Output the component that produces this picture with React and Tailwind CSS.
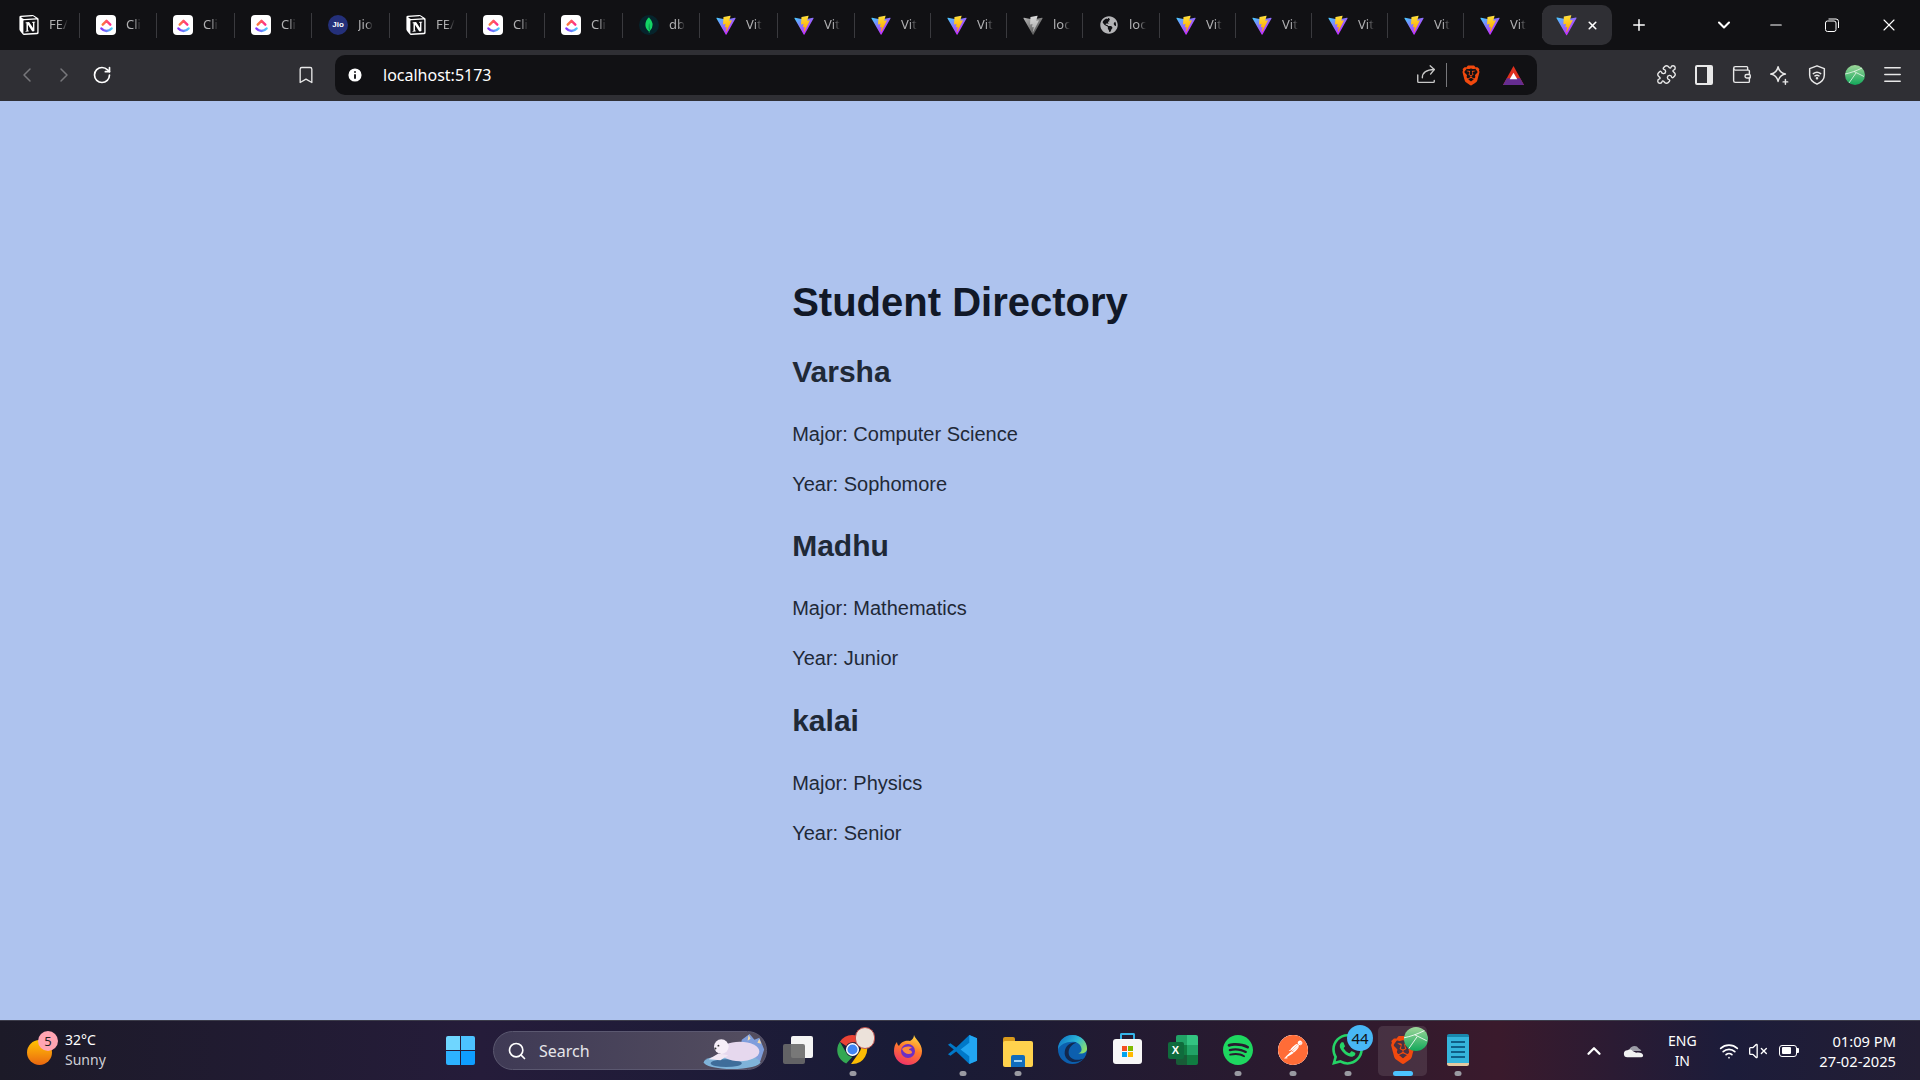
import {
  ChevronLeft,
  ChevronRight,
  RotateCw,
  Bookmark,
  Info,
  Puzzle,
  Wallet,
  Menu,
  Plus,
  X,
  ChevronDown,
  ChevronUp,
  Minus,
  Search,
  Wifi,
  VolumeX,
} from "lucide-react";
import { FaGlobeAmericas } from "react-icons/fa";
import { SiNotion, SiMongodb, SiBrave, SiSpotify, SiPostman, SiWhatsapp } from "react-icons/si";

const students = [
  { name: "Varsha", major: "Computer Science", year: "Sophomore" },
  { name: "Madhu", major: "Mathematics", year: "Junior" },
  { name: "kalai", major: "Physics", year: "Senior" },
];

const ViteIcon = ({ className = "" }) => (
  <svg viewBox="0 0 410 404" className={`w-[21px] h-[21px] ${className}`}>
    <defs>
      <linearGradient id="viteA" x1="6" y1="33" x2="235" y2="344" gradientUnits="userSpaceOnUse">
        <stop stopColor="#41D1FF" />
        <stop offset="1" stopColor="#BD34FE" />
      </linearGradient>
      <linearGradient id="viteB" x1="194" y1="8" x2="236" y2="293" gradientUnits="userSpaceOnUse">
        <stop stopColor="#FFEA83" />
        <stop offset="0.08" stopColor="#FFDD35" />
        <stop offset="1" stopColor="#FFA800" />
      </linearGradient>
    </defs>
    <path
      fill="url(#viteA)"
      d="M399.641 59.5246L215.643 388.545C211.844 395.338 202.084 395.378 198.228 388.618L10.5817 59.5563C6.38087 52.1896 12.6802 43.2665 21.0281 44.7586L205.223 77.6824C206.398 77.8924 207.601 77.8904 208.776 77.6763L389.119 44.8058C397.439 43.2894 403.768 52.1434 399.641 59.5246Z"
    />
    <path
      fill="url(#viteB)"
      d="M292.965 1.5744L156.801 28.2552C154.563 28.6937 152.906 30.5903 152.771 32.8664L144.395 174.33C144.198 177.662 147.258 180.248 150.51 179.498L188.42 170.749C191.967 169.931 195.172 173.055 194.443 176.622L183.18 231.775C182.422 235.487 185.907 238.661 189.532 237.56L212.947 230.446C216.577 229.344 220.065 232.527 219.297 236.242L201.398 322.875C200.278 328.294 207.486 331.249 210.492 326.603L212.5 323.5L323.454 102.072C325.312 98.3645 322.108 94.137 318.036 94.9228L279.014 102.454C275.347 103.161 272.227 99.746 273.262 96.1583L298.731 7.86689C299.767 4.27314 296.636 0.855181 292.965 1.5744Z"
    />
  </svg>
);

const ClickUpIcon = () => (
  <div className="w-5 h-5 rounded-[4px] bg-white flex items-center justify-center">
    <svg viewBox="0 0 20 20" className="w-[17px] h-[17px]" fill="none" strokeWidth="2.8" strokeLinecap="round" strokeLinejoin="round">
      <defs>
        <linearGradient id="cuTop" x1="0" y1="0" x2="1" y2="0">
          <stop stopColor="#ff7a3c" />
          <stop offset="1" stopColor="#ff2d8a" />
        </linearGradient>
        <linearGradient id="cuBot" x1="0" y1="0" x2="1" y2="0">
          <stop stopColor="#8930fd" />
          <stop offset="1" stopColor="#49ccf9" />
        </linearGradient>
      </defs>
      <path d="M5.5 9 10 4.500 14.500 9" stroke="url(#cuTop)" />
      <path d="M4 13.500c3.500 4 8.500 4 12 0" stroke="url(#cuBot)" />
    </svg>
  </div>
);

const NotionIcon = () => (
  <div className="w-5 h-5 flex items-center justify-center rounded-[4px] bg-[#111114]">
    <SiNotion className="w-5 h-5 text-white" />
  </div>
);

const JioIcon = () => (
  <div className="w-5 h-5 rounded-full bg-[#24307a] flex items-center justify-center text-white text-[8px] font-bold font-['Liberation_Sans',sans-serif]">
    Jio
  </div>
);

const MongoIcon = () => (
  <div className="w-5 h-5 rounded-full bg-[#06242c] flex items-center justify-center">
    <SiMongodb className="w-4 h-4 text-[#13d565]" />
  </div>
);

const tabs = [
  { icon: <NotionIcon />, title: "FE/", w: "w-[77px]" },
  { icon: <ClickUpIcon />, title: "Cli", w: "w-[77px]" },
  { icon: <ClickUpIcon />, title: "Cli", w: "w-[78px]" },
  { icon: <ClickUpIcon />, title: "Cli", w: "w-[77px]" },
  { icon: <JioIcon />, title: "Jio", w: "w-[78px]" },
  { icon: <NotionIcon />, title: "FE/", w: "w-[77px]" },
  { icon: <ClickUpIcon />, title: "Cli", w: "w-[78px]" },
  { icon: <ClickUpIcon />, title: "Cli", w: "w-[78px]" },
  { icon: <MongoIcon />, title: "db", w: "w-[77px]" },
  { icon: <ViteIcon />, title: "Vit", w: "w-[78px]" },
  { icon: <ViteIcon />, title: "Vit", w: "w-[77px]" },
  { icon: <ViteIcon />, title: "Vit", w: "w-[76px]" },
  { icon: <ViteIcon />, title: "Vit", w: "w-[76px]" },
  { icon: <ViteIcon className="grayscale" />, title: "loc", w: "w-[76px]" },
  { icon: <FaGlobeAmericas className="w-[18px] h-[18px] text-[#b4b4b6]" />, title: "loc", w: "w-[77px]" },
  { icon: <ViteIcon />, title: "Vit", w: "w-[76px]" },
  { icon: <ViteIcon />, title: "Vit", w: "w-[76px]" },
  { icon: <ViteIcon />, title: "Vit", w: "w-[76px]" },
  { icon: <ViteIcon />, title: "Vit", w: "w-[76px]" },
  { icon: <ViteIcon />, title: "Vit", w: "w-[79px]" },
];

const Tab = ({ icon, title, w }) => (
  <div className={`${w} h-[25px] flex items-center pl-4 border-r border-[#3a3a3e] shrink-0`}>
    <div className="w-5 h-5 flex items-center justify-center shrink-0">{icon}</div>
    <span className="ml-[10px] whitespace-nowrap text-[13px] text-[#b0b0b2] [mask-image:linear-gradient(to_right,black_55%,transparent)]">
      {title}
    </span>
  </div>
);

const TabStrip = () => (
  <div className="h-[50px] bg-[#111114] flex items-center pl-[3px] font-['Noto_Sans',sans-serif]">
    {tabs.map((t, i) => (
      <Tab key={i} {...t} />
    ))}
    <div className="ml-[-1px] w-[70px] h-10 rounded-[10px] bg-[#2f2f34] flex items-center pl-[14px] shrink-0">
      <ViteIcon />
      <X className="ml-[9px] w-[13px] h-[13px] text-white" strokeWidth={3} />
    </div>
    <Plus className="ml-[18px] w-[18px] h-[18px] text-white" strokeWidth={2} />
    <ChevronDown className="ml-[66px] w-5 h-5 text-white" strokeWidth={2.5} />
    <Minus className="ml-[33px] w-[18px] h-[18px] text-white" strokeWidth={1.5} />
    <svg viewBox="0 0 14 14" className="ml-[40px] w-[14px] h-[14px]" fill="none" stroke="#fff" strokeWidth="1">
      <rect x="0.5" y="3" width="10.5" height="10.5" rx="2" />
      <path d="M3.5 1h7.500a2.500 2.500 0 0 1 2.500 2.500V10" />
    </svg>
    <X className="ml-[40px] w-[20px] h-[20px] text-white" strokeWidth={1.3} />
  </div>
);

const BatIcon = () => (
  <svg viewBox="0 0 24 22" className="w-[23px] h-[21px]">
    <path d="M12 1 1 21h22z" fill="#e0301e" />
    <path d="M1 21 5 14h14l4 7z" fill="#662d91" />
    <path d="M12 8 8 15h8z" fill="#fff" />
  </svg>
);

const ShareIcon = () => (
  <svg viewBox="0 0 24 24" className="w-[22px] h-[22px]" fill="none" stroke="#c8c8c8" strokeWidth="1.5" strokeLinecap="round" strokeLinejoin="round">
    <path d="M3 12v7a1 1 0 0 0 1 1h16a1 1 0 0 0 1-1v-1" />
    <path d="M8 15c0-5 4-9 13-9" />
    <path d="M16.500 2 21 6l-4 5" />
  </svg>
);

const StarsIcon = () => (
  <svg viewBox="0 0 24 24" className="w-[22px] h-[22px]" fill="none" stroke="#e8e8e8" strokeWidth="1.6" strokeLinejoin="round" strokeLinecap="round">
    <path d="M11 3c1 5 3 7 8 8-5 1-7 3-8 8-1-5-3-7-8-8 5-1 7-3 8-8z" />
    <path d="M19 17v5M16.500 19.500h5" />
  </svg>
);

const VpnShield = () => (
  <svg viewBox="0 0 24 24" className="w-[22px] h-[22px]" fill="none" stroke="#e8e8e8" strokeWidth="1.6" strokeLinecap="round" strokeLinejoin="round">
    <path d="M12 2 4 5v7c0 5 3.500 8 8 10 4.500-2 8-5 8-10V5z" />
    <path d="M8 10.500c2.500-2 5.500-2 8 0M9.800 13c1.400-1 3-1 4.400 0" />
    <circle cx="12" cy="15.500" r="0.6" fill="#e8e8e8" />
  </svg>
);

const GreenGlobe = ({ className }) => (
  <svg viewBox="0 0 20 20" className={className}>
    <defs>
      <linearGradient id="globeG" x1="0" y1="0" x2="0" y2="1">
        <stop stopColor="#9ed69a" />
        <stop offset="1" stopColor="#12a85a" />
      </linearGradient>
    </defs>
    <circle cx="10" cy="10" r="10" fill="url(#globeG)" />
    <path d="M0 9C5 8 11 6 17 3M9 6.500l10 5M4 18l7-10" stroke="#fff" strokeWidth="0.7" fill="none" />
  </svg>
);

const ToolBtn = ({ children }) => <div className="w-[37.6px] h-10 flex items-center justify-center">{children}</div>;

const Toolbar = () => (
  <div className="h-[51px] bg-[#2f2f34] flex items-center font-['Noto_Sans',sans-serif]">
    <div className="w-[335px] flex items-center pl-2 mt-[-2px]">
      <ToolBtn>
        <ChevronLeft className="w-6 h-6 text-[#77777b]" strokeWidth={1.5} />
      </ToolBtn>
      <ToolBtn>
        <ChevronRight className="w-6 h-6 text-[#77777b]" strokeWidth={1.5} />
      </ToolBtn>
      <ToolBtn>
        <RotateCw className="w-5 h-5 text-white" strokeWidth={2} />
      </ToolBtn>
      <div className="ml-auto mr-[19px]">
        <Bookmark className="w-[20px] h-[22px] text-[#e8e8e8]" strokeWidth={1.6} />
      </div>
    </div>
    <div className="w-[1202px] h-10 bg-[#111114] rounded-[10px] flex items-center pl-[11px] mt-[-1px]">
      <Info className="w-[18px] h-[18px] text-[#111114] fill-white" strokeWidth={2.5} />
      <span className="ml-[19px] text-[16px] text-white">localhost:5173</span>
      <div className="ml-auto flex items-center pr-[12px]">
        <ShareIcon />
        <div className="ml-[9px] w-px h-6 bg-[#77777b]" />
        <SiBrave className="ml-[14px] w-[20px] h-[23px] text-[#f1490e]" />
        <div className="ml-[21px]">
          <BatIcon />
        </div>
      </div>
    </div>
    <div className="ml-auto flex items-center pr-[9px] mt-[-2px]">
      <ToolBtn>
        <Puzzle className="w-[21px] h-[21px] text-[#e8e8e8]" strokeWidth={1.6} />
      </ToolBtn>
      <ToolBtn>
        <div className="w-[18px] h-[20px] rounded-[2px] border-2 border-[#e8e8e8] border-r-[6px]" />
      </ToolBtn>
      <ToolBtn>
        <Wallet className="w-[21px] h-[21px] text-[#e8e8e8]" strokeWidth={1.6} />
      </ToolBtn>
      <ToolBtn>
        <StarsIcon />
      </ToolBtn>
      <ToolBtn>
        <VpnShield />
      </ToolBtn>
      <ToolBtn>
        <GreenGlobe className="w-5 h-5" />
      </ToolBtn>
      <ToolBtn>
        <Menu className="w-[23px] h-[23px] text-[#e8e8e8]" strokeWidth={1.6} />
      </ToolBtn>
    </div>
  </div>
);

const Directory = () => (
  <main className="flex-1 bg-[#aec3ee] flex items-center justify-center font-['Liberation_Sans',sans-serif]">
    <div className="pb-[1px]">
      <h1 className="text-[40px] leading-[60px] font-bold text-[#111827] mb-[17px]">Student Directory</h1>
      {students.map((s) => (
        <section key={s.name} className="mb-[25px] first-of-type:mb-[24px] last:mb-0">
          <h2 className="text-[30px] leading-[45px] font-bold text-[#1f2937] mb-[25px]">{s.name}</h2>
          <p className="text-[20px] leading-[30px] text-[#1f2937] mb-5">Major: {s.major}</p>
          <p className="text-[20px] leading-[30px] text-[#1f2937]">Year: {s.year}</p>
        </section>
      ))}
    </div>
  </main>
);

const WindowsIcon = () => (
  <div className="grid grid-cols-2 gap-px w-[29px] h-[29px]">
    <div className="bg-[#6fd6ff] rounded-tl-[2px]" />
    <div className="bg-[#4cc2ff] rounded-tr-[2px]" />
    <div className="bg-[#2db2ff] rounded-bl-[2px]" />
    <div className="bg-[#0f9dff] rounded-br-[2px]" />
  </div>
);

const TaskView = () => (
  <div className="relative w-[30px] h-[28px]">
    <div className="absolute right-0 top-0 w-[22px] h-[22px] rounded-[2px] bg-[#f4f4f4]" />
    <div className="absolute left-0 bottom-0 w-[22px] h-[20px] rounded-[2px] bg-[#6a6a6a]/90" />
  </div>
);

const ChromeIcon = () => (
  <svg viewBox="0 0 32 32" className="w-[31px] h-[31px]">
    <path d="M16 1a15 15 0 0 1 13 7.500H16a7.500 7.500 0 0 0-6.500 3.800L3 8A15 15 0 0 1 16 1z" fill="#ea4335" />
    <path d="M3 8l6.500 11.300A7.500 7.500 0 0 0 16 23.500L9.500 30.500A15 15 0 0 1 3 8z" fill="#34a853" />
    <path d="M29 8.500a15 15 0 0 1-13 22.500h-1.500L22.500 19.500a7.500 7.500 0 0 0 0-11z" fill="#fbbc04" />
    <circle cx="16" cy="16" r="6" fill="#4285f4" stroke="#fff" strokeWidth="1.500" />
  </svg>
);

const FirefoxIcon = () => (
  <svg viewBox="0 0 32 32" className="w-[32px] h-[32px]">
    <defs>
      <linearGradient id="ffBody" x1="0.7" y1="0" x2="0.3" y2="1">
        <stop stopColor="#ffd53d" />
        <stop offset="0.45" stopColor="#ff7a2b" />
        <stop offset="1" stopColor="#f0306a" />
      </linearGradient>
    </defs>
    <path d="M22 1c1 4 8 8 8 16a14 14 0 0 1-28 0c0-4 1-7 3-9 0 2 1 3 2 4 2-5 8-6 11-5 2-1 4-3 4-6z" fill="url(#ffBody)" />
    <circle cx="16" cy="17" r="7" fill="#6d2fc4" />
    <path d="M10 15c3-3 8-3 10-1-2 0-3 1-3 2 2 0 3 1 3 3-3 2-8 1-10-4z" fill="#ff8a3c" />
  </svg>
);

const VsCodeIcon = () => (
  <svg viewBox="0 0 32 32" className="w-[31px] h-[31px]">
    <path d="M23 1 9.500 14 3.500 9.500 1 11l6 5-6 5 2.500 1.500 6-4.500L23 31l8-3.500V4.500z" fill="#0078c8" />
    <path d="M23 1l8 3.500v23L23 31V9l-9 7 9 7z" fill="#22a6f2" />
  </svg>
);

const FolderIcon = () => (
  <div className="relative w-[30px] h-[32px] mt-[2px]">
    <div className="absolute left-0 top-[2px] w-[12px] h-[8px] rounded-t-[2px] bg-[#d99a1c]" />
    <div className="absolute left-0 top-[6px] w-full h-[26px] rounded-[2px] bg-[#ffd24d]" />
    <div className="absolute left-[8px] bottom-0 w-[14px] h-[12px] rounded-t-[2px] bg-[#0f6cbd]" />
    <div className="absolute left-[11px] bottom-[5px] w-[8px] h-[2px] bg-[#9fd3f7]" />
  </div>
);

const EdgeIcon = () => (
  <svg viewBox="0 0 32 32" className="w-[31px] h-[31px]">
    <defs>
      <linearGradient id="edgeTop" x1="0" y1="0.2" x2="1" y2="0.7">
        <stop stopColor="#0f74c4" />
        <stop offset="0.55" stopColor="#2bb6d8" />
        <stop offset="1" stopColor="#8ede6a" />
      </linearGradient>
    </defs>
    <circle cx="16" cy="16" r="15" fill="#0c5fae" />
    <path d="M1 16C1 7 8 1 16 1c9 0 15 7 15 14 0 4-4 6-9 5 3-1 4-3 3-6-1-4-5-6-9-6-7 0-13 3-15 8z" fill="url(#edgeTop)" />
    <path d="M12 19c0-5 4-9 8-10-6-1-11 3-12 9-1 6 4 11 10 11 4 0 8-2 10-4-6 3-16 2-16-6z" fill="#12284e" />
  </svg>
);

const StoreIcon = () => (
  <div className="relative w-[29px] h-[31px] mt-[-2px]">
    <div className="absolute left-[7px] top-0 w-[15px] h-[8px] border-2 border-b-0 border-[#35b4e8] rounded-t-[2px]" />
    <div className="absolute left-0 top-[6px] w-full h-[25px] rounded-[3px] bg-[#f7f7f7]" />
    <div className="absolute left-[9px] top-[13px] grid grid-cols-2 gap-px w-[11px] h-[11px]">
      <div className="bg-[#f25022]" />
      <div className="bg-[#7fba00]" />
      <div className="bg-[#00a4ef]" />
      <div className="bg-[#ffb900]" />
    </div>
  </div>
);

const ExcelIcon = () => (
  <div className="relative w-[30px] h-[30px]">
    <div className="absolute right-0 top-0 w-[22px] h-full rounded-[2px] grid grid-cols-2 grid-rows-3 overflow-hidden">
      <div className="bg-[#21a366]" />
      <div className="bg-[#33c481]" />
      <div className="bg-[#107c41]" />
      <div className="bg-[#21a366]" />
      <div className="bg-[#185c37]" />
      <div className="bg-[#107c41]" />
    </div>
    <div className="absolute left-0 top-[7px] w-[16px] h-[17px] rounded-[2px] bg-[#0f6b3c] text-white text-[11px] font-bold leading-[17px] text-center font-['Liberation_Sans',sans-serif]">
      X
    </div>
  </div>
);

const NotepadIcon = () => (
  <div className="w-[22px] h-[32px] rounded-[2px] bg-[#35b5dc] flex flex-col items-center justify-center gap-[3px] border-t-[3px] border-[#1987ad] border-b-[3px] border-b-[#e6c9a0]">
    <div className="w-[14px] h-[2px] bg-[#0f5f87]" />
    <div className="w-[14px] h-[2px] bg-[#0f5f87]" />
    <div className="w-[14px] h-[2px] bg-[#0f5f87]" />
    <div className="w-[14px] h-[2px] bg-[#0f5f87]" />
  </div>
);

const PolarBear = () => (
  <svg viewBox="0 0 64 38" className="ml-auto w-[64px] h-[37px]">
    <path d="M40 8l8-6 5 6 5-2 5 12-4 12H36z" fill="#7f9edc" />
    <path d="M47 3l2 4-3 2zM58 7l2 5-4-1z" fill="#f3d9a8" />
    <ellipse cx="30" cy="31" rx="29" ry="7" fill="#7fb3d9" />
    <ellipse cx="24" cy="32" rx="16" ry="4" fill="#3f6d9a" />
    <ellipse cx="38" cy="20" rx="20" ry="10" fill="#e6d8ee" />
    <circle cx="19" cy="15" r="7.500" fill="#f6eef8" />
    <path d="M16 22l-10 6 12 1 8-5z" fill="#f2e8f4" />
    <circle cx="16" cy="14" r="1" fill="#333" />
    <circle cx="13" cy="17" r="1" fill="#333" />
  </svg>
);

const OneDriveCloud = () => (
  <svg viewBox="0 0 24 16" className="w-[21px] h-[14px]">
    <path d="M7 8a6 6 0 0 1 11-3 5 5 0 0 1 3 3z" fill="#9c9ca6" />
    <path d="M5 15a4 4 0 0 1 0-8c2-1 4-1 6 1l4 2c3-1 8 0 8 3a2 2 0 0 1-2 2z" fill="#f2f2f2" />
  </svg>
);

const BatteryIcon = () => (
  <div className="flex items-center">
    <div className="w-[18px] h-[12px] rounded-[3px] border-[1.5px] border-white p-[1.5px] flex">
      <div className="w-[9px] h-full bg-white rounded-[1px]" />
    </div>
    <div className="w-[2px] h-[5px] bg-white rounded-r-[1px]" />
  </div>
);

const TaskItem = ({ children, dot, active }) => (
  <div className="relative w-[55px] h-[60px] flex items-center justify-center shrink-0">
    {active && <div className="absolute left-[3px] top-[5px] w-[49px] h-[50px] rounded-[5px] bg-white/10" />}
    <div className="relative mb-[2px] flex items-center justify-center">{children}</div>
    {dot && <div className="absolute left-1/2 -translate-x-1/2 bottom-[5px] w-[7px] h-[5px] rounded-full bg-[#9a9aa2]" />}
    {active && <div className="absolute left-1/2 -translate-x-1/2 bottom-[5px] w-5 h-[5px] rounded-full bg-[#4cc2ff]" />}
  </div>
);

const Taskbar = () => (
  <footer className="h-[60px] flex items-center border-t border-[#3c3c4a] bg-[linear-gradient(90deg,#1c1a28_0%,#251c3a_25%,#181b36_48%,#2c1a2e_68%,#3a1a2c_78%,#1c1c3a_90%,#231e34_100%)] font-['Noto_Sans',sans-serif]">
    <div className="w-[433px] flex items-center pl-[27px] shrink-0">
      <div className="relative w-[25px] h-[25px] mt-[3px]">
        <div className="w-[25px] h-[25px] rounded-full bg-gradient-to-b from-[#ffc400] to-[#e9660f]" />
        <div className="absolute left-[11px] top-[-9px] w-5 h-5 rounded-full bg-[#ffa5b2] text-[#222] text-[13px] leading-5 text-center">5</div>
      </div>
      <div className="ml-[13px] mt-[-2px] leading-5 text-[14px]">
        <div className="text-white">32°C</div>
        <div className="text-[#cfcfd6]">Sunny</div>
      </div>
    </div>

    <div className="flex items-center">
      <div className="w-[55px] flex justify-center">
        <WindowsIcon />
      </div>
      <div className="ml-[5px] mr-[3px] w-[274px] h-[39px] rounded-full bg-gradient-to-r from-[#3f3a55] to-[#544e60] border border-[#5b5870] flex items-center pl-[13px] overflow-hidden">
        <Search className="w-5 h-5 text-white" strokeWidth={2} />
        <span className="ml-[12px] text-[16px] text-[#e6e6ea]">Search</span>
        <PolarBear />
      </div>
      <TaskItem>
        <TaskView />
      </TaskItem>
      <TaskItem dot>
        <ChromeIcon />
        <div className="absolute right-[-7px] top-[-7px] w-5 h-[22px] rounded-full bg-[#ece2da] border border-[#c0504a]" />
      </TaskItem>
      <TaskItem>
        <FirefoxIcon />
      </TaskItem>
      <TaskItem dot>
        <VsCodeIcon />
      </TaskItem>
      <TaskItem dot>
        <FolderIcon />
      </TaskItem>
      <TaskItem>
        <EdgeIcon />
      </TaskItem>
      <TaskItem>
        <StoreIcon />
      </TaskItem>
      <TaskItem>
        <ExcelIcon />
      </TaskItem>
      <TaskItem dot>
        <SiSpotify className="w-[30px] h-[30px] text-[#1ed760]" />
      </TaskItem>
      <TaskItem dot>
        <div className="w-[30px] h-[30px] rounded-full bg-[#ff6c37] flex items-center justify-center">
          <SiPostman className="w-[30px] h-[30px] text-[#ff6c37] bg-white rounded-full" />
        </div>
      </TaskItem>
      <TaskItem dot>
        <SiWhatsapp className="w-[31px] h-[31px] text-[#25d366]" />
        <div className="absolute right-[-10px] top-[-9px] w-[26px] h-[26px] rounded-full bg-[#48b7f5] text-[#111] text-[15px] leading-[26px] text-center">44</div>
      </TaskItem>
      <TaskItem active>
        <SiBrave className="w-[28px] h-[32px] text-[#f1490e]" />
        <GreenGlobe className="absolute right-[-11px] top-[-8px] w-[24px] h-[26px]" />
      </TaskItem>
      <TaskItem dot>
        <NotepadIcon />
      </TaskItem>
    </div>

    <div className="ml-auto flex items-center pr-6 text-white text-[14px]">
      <ChevronUp className="w-[22px] h-[22px]" strokeWidth={2.5} />
      <div className="ml-[18px]">
        <OneDriveCloud />
      </div>
      <div className="ml-[18px] w-[40px] text-center leading-5">
        <div>ENG</div>
        <div>IN</div>
      </div>
      <Wifi className="ml-[17px] w-5 h-5" strokeWidth={2} />
      <VolumeX className="ml-[9px] w-5 h-5" strokeWidth={1.6} />
      <div className="ml-[11px]">
        <BatteryIcon />
      </div>
      <div className="ml-[20px] text-right leading-5 text-[14.7px]">
        <div>01:09 PM</div>
        <div>27-02-2025</div>
      </div>
    </div>
  </footer>
);

export default function App() {
  return (
    <div className="h-screen flex flex-col overflow-hidden">
      <TabStrip />
      <Toolbar />
      <Directory />
      <Taskbar />
    </div>
  );
}
